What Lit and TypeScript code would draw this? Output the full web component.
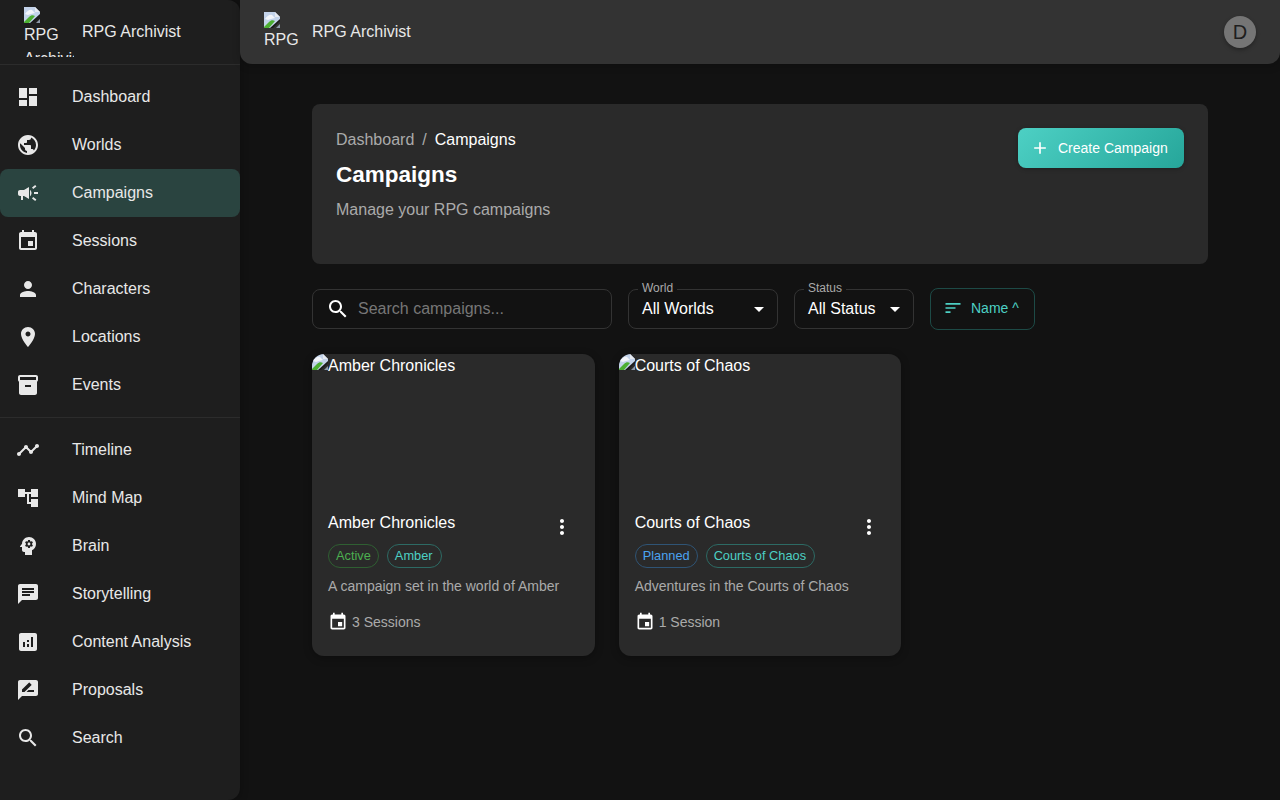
import {LitElement, html, css} from 'lit';
import {customElement} from 'lit/decorators.js';

const ICONS: Record<string, string> = {
  dashboard: 'M3 13h8V3H3v10zm0 8h8v-6H3v6zm10 0h8V11h-8v10zm0-18v6h8V3h-8z',
  public: 'M12 2C6.48 2 2 6.48 2 12s4.48 10 10 10 10-4.48 10-10S17.52 2 12 2zm-1 17.93c-3.95-.49-7-3.85-7-7.93 0-.62.08-1.21.21-1.79L9 15v1c0 1.1.9 2 2 2v1.93zm6.9-2.54c-.26-.81-1-1.39-1.9-1.39h-1v-3c0-.55-.45-1-1-1H8v-2h2c.55 0 1-.45 1-1V7h2c1.1 0 2-.9 2-2v-.41c2.93 1.19 5 4.06 5 7.41 0 2.08-.8 3.97-2.1 5.39z',
  campaign: 'M18 11v2h4v-2h-4zm-2 6.61c.96.71 2.21 1.65 3.2 2.39.4-.53.8-1.07 1.2-1.6-.99-.74-2.24-1.68-3.2-2.4-.4.54-.8 1.08-1.2 1.61zM20.4 5.6c-.4-.53-.8-1.07-1.2-1.6-.99.74-2.24 1.68-3.2 2.4.4.53.8 1.07 1.2 1.6.96-.72 2.21-1.65 3.2-2.4zM4 9c-1.1 0-2 .9-2 2v2c0 1.1.9 2 2 2h1v4h2v-4h1l5 3V6L8 9H4zm11.5 3c0-1.33-.58-2.53-1.5-3.35v6.69c.92-.81 1.5-2.01 1.5-3.34z',
  event: 'M17 12h-5v5h5v-5zM16 1v2H8V1H6v2H5c-1.11 0-1.99.9-1.99 2L3 19c0 1.1.89 2 2 2h14c1.1 0 2-.9 2-2V5c0-1.1-.9-2-2-2h-1V1h-2zm3 18H5V8h14v11z',
  person: 'M12 12c2.21 0 4-1.79 4-4s-1.79-4-4-4-4 1.79-4 4 1.79 4 4 4zm0 2c-2.67 0-8 1.34-8 4v2h16v-2c0-2.66-5.33-4-8-4z',
  place: 'M12 2C8.13 2 5 5.13 5 9c0 5.25 7 13 7 13s7-7.75 7-13c0-3.87-3.13-7-7-7zm0 9.5c-1.38 0-2.5-1.12-2.5-2.5s1.12-2.5 2.5-2.5 2.5 1.12 2.5 2.5-1.12 2.5-2.5 2.5z',
  inventory: 'M20 2H4c-1 0-2 .9-2 2v3.01c0 .72.43 1.34 1 1.69V20c0 1.1 1.1 2 2 2h14c.9 0 2-.9 2-2V8.7c.57-.35 1-.97 1-1.69V4c0-1.1-1-2-2-2zm-5 12H9v-2h6v2zm5-7H4V4l16-.02V7z',
  timeline: 'M23 8c0 1.1-.9 2-2 2-.18 0-.35-.02-.51-.07l-3.56 3.55c.05.16.07.34.07.52 0 1.1-.9 2-2 2s-2-.9-2-2c0-.18.02-.36.07-.52l-2.55-2.55c-.16.05-.34.07-.52.07s-.36-.02-.52-.07l-4.55 4.56c.05.16.07.33.07.51 0 1.1-.9 2-2 2s-2-.9-2-2 .9-2 2-2c.18 0 .35.02.51.07l4.56-4.55C8.02 9.36 8 9.18 8 9c0-1.1.9-2 2-2s2 .9 2 2c0 .18-.02.36-.07.52l2.55 2.55c.16-.05.34-.07.52-.07s.36.02.52.07l3.55-3.56C19.02 8.35 19 8.18 19 8c0-1.1.9-2 2-2s2 .9 2 2z',
  tree: 'M22 11V3h-7v3H9V3H2v8h7V8h2v10h4v3h7v-8h-7v3h-2V8h2v3z',
  brain: 'M13 8.57c-.79 0-1.43.64-1.43 1.43s.64 1.43 1.43 1.43 1.43-.64 1.43-1.43-.64-1.43-1.43-1.43zM13 3C9.25 3 6.2 5.94 6.02 9.64L4.1 12.2c-.25.33-.01.8.4.8H6v3c0 1.1.9 2 2 2h1v3h7v-4.68c2.36-1.12 4-3.53 4-6.32 0-3.87-3.13-7-7-7zm3 7c0 .13-.01.26-.03.38l.83.66c.08.06.1.16.05.25l-.8 1.39c-.05.09-.16.12-.24.09l-.99-.4c-.21.16-.43.29-.67.39L14 13.83c-.01.1-.1.17-.2.17h-1.6c-.1 0-.18-.07-.2-.17l-.15-1.06c-.25-.1-.47-.23-.68-.39l-.99.4c-.09.03-.2 0-.25-.09l-.8-1.39c-.05-.08-.03-.19.05-.25l.84-.66c-.01-.13-.02-.26-.02-.39s.02-.27.04-.39l-.85-.66c-.08-.06-.1-.16-.05-.26l.8-1.38c.05-.09.15-.12.24-.09l1 .4c.2-.15.43-.29.67-.39L12 6.17c.02-.1.1-.17.2-.17h1.6c.1 0 .18.07.2.17l.15 1.06c.24.1.46.23.67.39l1-.4c.09-.03.2 0 .24.09l.8 1.38c.05.09.03.2-.05.26l-.85.66c.03.12.04.25.04.39z',
  chat: 'M20 2H4c-1.1 0-1.99.9-1.99 2L2 22l4-4h14c1.1 0 2-.9 2-2V4c0-1.1-.9-2-2-2zM6 9h12v2H6V9zm8 5H6v-2h8v2zm4-6H6V6h12v2z',
  analytics: 'M19 3H5c-1.1 0-2 .9-2 2v14c0 1.1.9 2 2 2h14c1.1 0 2-.9 2-2V5c0-1.1-.9-2-2-2zM9 17H7v-5h2v5zm4 0h-2v-3h2v3zm0-5h-2v-2h2v2zm4 5h-2V7h2v10z',
  review: 'M20 2H4c-1.1 0-1.99.9-1.99 2L2 22l4-4h14c1.1 0 2-.9 2-2V4c0-1.1-.9-2-2-2zM6 14v-2.47l6.88-6.88c.2-.2.51-.2.71 0l1.77 1.77c.2.2.2.51 0 .71L8.47 14H6zm12 0h-7.5l2-2H18v2z',
  search: 'M15.5 14h-.79l-.28-.27C15.41 12.59 16 11.11 16 9.5 16 5.91 13.09 3 9.5 3S3 5.91 3 9.5 5.91 16 9.5 16c1.61 0 3.09-.59 4.23-1.57l.27.28v.79l5 4.99L20.49 19l-4.99-5zm-6 0C7.01 14 5 11.99 5 9.5S7.01 5 9.5 5 14 7.01 14 9.5 11.99 14 9.5 14z',
  sort: 'M3 18h6v-2H3v2zM3 6v2h18V6H3zm0 7h12v-2H3v2z',
  add: 'M19 13h-6v6h-2v-6H5v-2h6V5h2v6h6v2z',
  more: 'M12 8c1.1 0 2-.9 2-2s-.9-2-2-2-2 .9-2 2 .9 2 2 2zm0 2c-1.1 0-2 .9-2 2s.9 2 2 2 2-.9 2-2-.9-2-2-2zm0 6c-1.1 0-2 .9-2 2s.9 2 2 2 2-.9 2-2-.9-2-2-2z',
  drop: 'M7 10l5 5 5-5z',
};

const NAV_TOP = [
  {icon: 'dashboard', label: 'Dashboard'},
  {icon: 'public', label: 'Worlds'},
  {icon: 'campaign', label: 'Campaigns', active: true},
  {icon: 'event', label: 'Sessions'},
  {icon: 'person', label: 'Characters'},
  {icon: 'place', label: 'Locations'},
  {icon: 'inventory', label: 'Events'},
];

const NAV_BOTTOM = [
  {icon: 'timeline', label: 'Timeline'},
  {icon: 'tree', label: 'Mind Map'},
  {icon: 'brain', label: 'Brain'},
  {icon: 'chat', label: 'Storytelling'},
  {icon: 'analytics', label: 'Content Analysis'},
  {icon: 'review', label: 'Proposals'},
  {icon: 'search', label: 'Search'},
];

const CAMPAIGNS = [
  {name: 'Amber Chronicles', status: 'Active', statusClass: 'active', world: 'Amber', text: 'A campaign set in the world of Amber', sessions: '3 Sessions'},
  {name: 'Courts of Chaos', status: 'Planned', statusClass: 'planned', world: 'Courts of Chaos', text: 'Adventures in the Courts of Chaos', sessions: '1 Session'},
];

const icon = (name: string, size = 24) => html`
  <svg class="icon" width=${size} height=${size} viewBox="0 0 24 24" fill="currentColor"><path d=${ICONS[name]}></path></svg>
`;

// stand-in for the browser's broken image glyph
const brokenImage = html`
  <svg class="broken" width="16" height="16" viewBox="0 0 16 16">
    <path d="M0 0h11l5 5v3l-8 8H0z" fill="#c3d3ea"></path>
    <path d="M1 7c2-3 5-5 7-4l3 3-4 1-3 1z" fill="#f2f5fa"></path>
    <path d="M0 15l5-5c2-2 4-2 6-1l-6 7H0z" fill="#4caf32"></path>
    <path d="M11 0l5 5h-5z" fill="#e6eaf1"></path>
    <path d="M6 16l10-9v2l-7 7z" fill="#1a1a1a"></path>
    <path d="M12 16l4-4v4z" fill="#8d99a8"></path>
  </svg>
`;

@customElement('app-root')
export class AppRoot extends LitElement {
  static styles = css`
    :host {
      display: flex;
      height: 800px;
      overflow: hidden;
      background: #121212;
      color: #fff;
      font-family: "Liberation Sans", Arial, sans-serif;
      font-size: 16px;
    }

    .icon, .broken {
      display: block;
      flex: none;
    }

    .sidebar {
      width: 240px;
      flex: none;
      background: #1e1e1e;
      border-radius: 0 12px 12px 0;
      box-shadow: 0 2px 8px rgba(0, 0, 0, 0.3);
      overflow: hidden;
    }

    .brand {
      height: 65px;
      box-sizing: border-box;
      display: flex;
      align-items: center;
      gap: 8px;
      padding-left: 24px;
      border-bottom: 1px solid #2c2c2c;
      color: #e8e8e8;
    }

    .logo {
      width: 50px;
      height: 50px;
      overflow: hidden;
      flex: none;
      color: #e8e8e8;
      line-height: 24px;
    }

    .top-logo {
      width: 40px;
      height: 40px;
    }

    .nav {
      padding-top: 7.6px;
    }

    .nav-item {
      height: 48px;
      display: flex;
      align-items: center;
      padding-left: 16px;
      color: #e8e8e8;
      border-radius: 8px;
    }

    .nav-item .label {
      margin-left: 32px;
    }

    .nav-item.active {
      background: #2a4440;
    }

    .divider {
      height: 1px;
      margin: 8px 0;
      background: #2c2c2c;
    }

    .content {
      flex: 1;
      min-width: 0;
    }

    .topbar {
      height: 64px;
      box-sizing: border-box;
      display: flex;
      align-items: center;
      padding: 0 24px;
      background: #333;
      border-radius: 0 0 12px 12px;
      box-shadow: 0 2px 8px rgba(0, 0, 0, 0.2);
      color: #e8e8e8;
    }

    .topbar .title {
      margin-left: 8px;
      flex: 1;
    }

    .avatar {
      width: 32px;
      height: 32px;
      border-radius: 50%;
      background: #757575;
      color: #1e1e1e;
      font-size: 20px;
      display: flex;
      align-items: center;
      justify-content: center;
      box-shadow: 0 2px 4px rgba(0, 0, 0, 0.3);
    }

    .page {
      padding: 40px 72px;
    }

    .hero {
      height: 160px;
      box-sizing: border-box;
      padding: 24px;
      background: #2a2a2a;
      border-radius: 8px;
      display: flex;
      justify-content: space-between;
      align-items: flex-start;
    }

    .crumbs {
      display: flex;
      gap: 8px;
      color: #aaa;
      line-height: 24px;
    }

    .crumbs .current {
      color: #fff;
    }

    h1 {
      margin: 9px 0 0;
      font-size: 22.5px;
      line-height: 28px;
      font-weight: 700;
    }

    .subtitle {
      margin-top: 9px;
      line-height: 24px;
      color: #aaa;
    }

    .create {
      width: 166px;
      height: 40px;
      box-sizing: border-box;
      display: flex;
      align-items: center;
      gap: 8px;
      padding-left: 12px;
      border-radius: 8px;
      background: linear-gradient(135deg, #4dd0c4, #26a69a);
      box-shadow: 0 1px 4px rgba(0, 0, 0, 0.25);
      font-size: 14px;
    }

    .filters {
      margin-top: 24px;
      display: flex;
      align-items: center;
      gap: 16px;
    }

    .search {
      width: 300px;
      height: 40px;
      box-sizing: border-box;
      display: flex;
      align-items: center;
      gap: 8px;
      padding-left: 13px;
      border: 1px solid #333;
      border-radius: 8px;
      color: #777;
    }

    .search .icon {
      color: #fff;
    }

    .select {
      position: relative;
      height: 40px;
      box-sizing: border-box;
      display: flex;
      align-items: center;
      justify-content: space-between;
      padding: 0 6px 0 13px;
      border: 1px solid #333;
      border-radius: 8px;
    }

    .select.world {
      width: 150px;
    }

    .select.status {
      width: 120px;
    }

    .select .legend {
      position: absolute;
      top: -9px;
      left: 9px;
      padding: 0 4px;
      background: #121212;
      color: #aaa;
      font-size: 12px;
      line-height: 14px;
    }

    .sort {
      width: 105px;
      height: 42px;
      box-sizing: border-box;
      display: flex;
      align-items: center;
      gap: 8px;
      padding: 0 0 2px 12px;
      border: 1px solid #1d4a46;
      border-radius: 8px;
      color: #4dd0c4;
      font-size: 14px;
    }

    .grid {
      margin-top: 24px;
      display: grid;
      grid-template-columns: repeat(3, 1fr);
      gap: 24px;
    }

    .card {
      height: 302px;
      background: #2a2a2a;
      border-radius: 12px;
      overflow: hidden;
      box-shadow: 0 2px 8px rgba(0, 0, 0, 0.3);
    }

    .image {
      height: 140px;
      display: flex;
      align-items: flex-start;
      line-height: 24px;
    }

    .body {
      padding: 17px 16px 16px;
    }

    .title-row {
      display: flex;
      justify-content: space-between;
      height: 24px;
      line-height: 24px;
    }

    .more {
      margin: 4px 4.6px 0 0;
    }

    .chips {
      margin-top: 9px;
      display: flex;
      gap: 8px;
    }

    .chip {
      height: 24px;
      box-sizing: border-box;
      padding: 0 7px;
      border: 1px solid;
      border-radius: 12px;
      font-size: 12.8px;
      line-height: 22px;
    }

    .chip.active {
      color: #4caf50;
      border-color: #2f5f32;
    }

    .chip.planned {
      color: #4aa3f0;
      border-color: #2f5475;
    }

    .chip.world {
      padding-right: 8px;
      color: #4dd0c4;
      border-color: #2d6a64;
    }

    .text {
      margin-top: 8px;
      font-size: 14px;
      line-height: 20px;
      color: #aaa;
    }

    .meta {
      margin-top: 16px;
      display: flex;
      align-items: center;
      gap: 4px;
      font-size: 14px;
      color: #aaa;
    }

    .meta .icon {
      color: #fff;
    }
  `;

  renderNavItem(item: {icon: string; label: string; active?: boolean}) {
    return html`
      <div class="nav-item ${item.active ? 'active' : ''}">
        ${icon(item.icon)}
        <span class="label">${item.label}</span>
      </div>
    `;
  }

  renderCard(campaign: (typeof CAMPAIGNS)[number]) {
    return html`
      <div class="card">
        <div class="image">${brokenImage}<span>${campaign.name}</span></div>
        <div class="body">
          <div class="title-row">
            <span>${campaign.name}</span>
            <span class="more">${icon('more')}</span>
          </div>
          <div class="chips">
            <span class="chip ${campaign.statusClass}">${campaign.status}</span>
            <span class="chip world">${campaign.world}</span>
          </div>
          <div class="text">${campaign.text}</div>
          <div class="meta">${icon('event', 20)}<span>${campaign.sessions}</span></div>
        </div>
      </div>
    `;
  }

  render() {
    return html`
      <aside class="sidebar">
        <div class="brand">
          <div class="logo">${brokenImage}RPG Archivist</div>
          <span>RPG Archivist</span>
        </div>
        <div class="nav">
          ${NAV_TOP.map((item) => this.renderNavItem(item))}
          <div class="divider"></div>
          ${NAV_BOTTOM.map((item) => this.renderNavItem(item))}
        </div>
      </aside>
      <div class="content">
        <header class="topbar">
          <div class="logo top-logo">${brokenImage}RPG Archivist</div>
          <span class="title">RPG Archivist</span>
          <div class="avatar">D</div>
        </header>
        <main class="page">
          <section class="hero">
            <div>
              <div class="crumbs"><span>Dashboard</span><span>/</span><span class="current">Campaigns</span></div>
              <h1>Campaigns</h1>
              <div class="subtitle">Manage your RPG campaigns</div>
            </div>
            <div class="create">${icon('add', 20)}<span>Create Campaign</span></div>
          </section>
          <div class="filters">
            <div class="search">${icon('search')}<span>Search campaigns...</span></div>
            <div class="select world">
              <span class="legend">World</span>
              <span>All Worlds</span>${icon('drop')}
            </div>
            <div class="select status">
              <span class="legend">Status</span>
              <span>All Status</span>${icon('drop')}
            </div>
            <div class="sort">${icon('sort', 20)}<span>Name ^</span></div>
          </div>
          <div class="grid">${CAMPAIGNS.map((campaign) => this.renderCard(campaign))}</div>
        </main>
      </div>
    `;
  }
}
